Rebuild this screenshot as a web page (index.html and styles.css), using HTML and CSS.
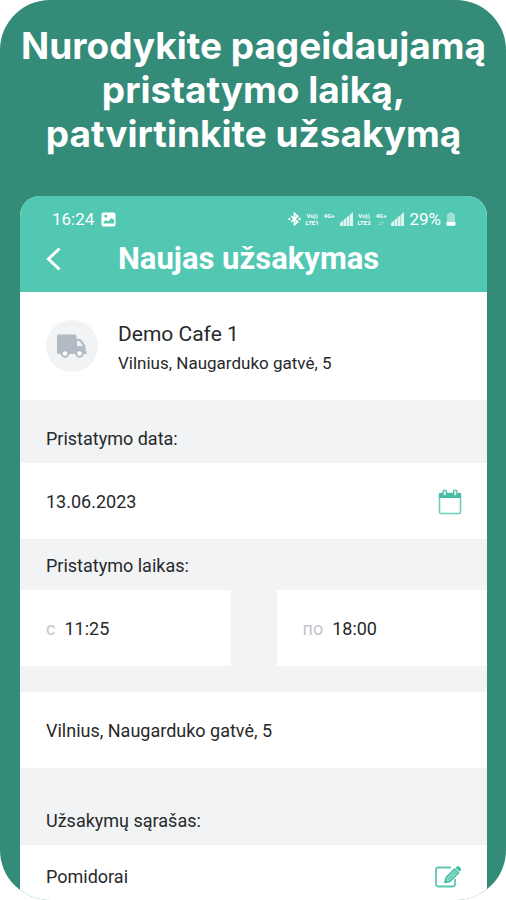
FILE: index.html
```html
<!DOCTYPE html>
<html lang="lt">
<head>
  <meta charset="UTF-8">
  <meta name="viewport" content="width=device-width, initial-scale=1.0">
  <title>Naujas užsakymas</title>
  <link rel="stylesheet" href="styles.css">
</head>
<body>
  <div class="poster">
    <h1 class="poster-title">Nurodykite pageidaujamą pristatymo laiką, patvirtinkite užsakymą</h1>

    <div class="phone">
      <!-- Header -->
      <header class="app-header">
        <div class="status-bar">
          <div class="status-group">
            <span>16:24</span>
            <svg width="15" height="15" viewBox="0 0 15 15" aria-hidden="true">
              <path fill="currentColor" fill-rule="evenodd" d="M2.500 0.500h10a2 2 0 0 1 2 2v10a2 2 0 0 1-2 2h-10a2 2 0 0 1-2-2v-10a2 2 0 0 1 2-2zM2.500 11.500h10.500v-3.500l-2.500-2-3.500 3.500-2-1.500-2.500 2zM3.500 3v2.500h2.500v-2.500z"/>
            </svg>
          </div>
          <div class="status-group status-right">
            <svg width="13" height="14" viewBox="0 0 14 14" aria-hidden="true">
              <path fill="none" stroke="currentColor" stroke-width="1.800" d="M3.500 4l7 6-3.500 3V1l3.500 3-7 6"/>
              <circle cx="1.500" cy="7" r="1.300" fill="currentColor"/>
              <circle cx="12.500" cy="7" r="1.300" fill="currentColor"/>
            </svg>
            <span class="net"><span>Vo))</span><span>LTE1</span></span>
            <span class="net"><span>4G+</span></span>
            <svg width="13" height="14" viewBox="0 0 13 14" aria-hidden="true">
              <path fill="currentColor" opacity=".8" d="M0 14v-3l3-2.500v5.500zM3.500 14v-6l2.500-2v8zM6.500 14v-8.500l3-2.500v11zM10 14v-11.500l3-2.500v14z"/>
            </svg>
            <span class="net"><span>Vo))</span><span>LTE2</span></span>
            <span class="net"><span>4G+</span><span>↓↑</span></span>
            <svg width="13" height="14" viewBox="0 0 13 14" aria-hidden="true">
              <path fill="currentColor" opacity=".8" d="M0 14v-3l3-2.500v5.500zM3.500 14v-6l2.500-2v8zM6.500 14v-8.500l3-2.500v11zM10 14v-11.500l3-2.500v14z"/>
            </svg>
            <span>29%</span>
            <svg width="10" height="14" viewBox="0 0 10 14" aria-hidden="true">
              <path fill="currentColor" opacity=".45" d="M1 3q0-1.500 2-1.500v-1h4v1q2 0 2 1.500v7H1z"/>
              <path fill="currentColor" d="M0.500 10h9v2.500q0 1.200-1.500 1.200H2q-1.500 0-1.500-1.200z"/>
            </svg>
          </div>
        </div>
        <div class="title-bar">
          <button class="icon-btn" type="button" aria-label="Atgal">
            <svg width="16" height="24" viewBox="0 0 16 24" aria-hidden="true">
              <path fill="none" stroke="currentColor" stroke-width="3" d="M13.500 1.500L2.500 12l11 10.500"/>
            </svg>
          </button>
          <h2 class="title">Naujas užsakymas</h2>
        </div>
      </header>

      <!-- Supplier -->
      <section class="supplier">
        <div class="avatar">
          <svg width="30" height="24" viewBox="0 0 30 24" aria-hidden="true">
            <path fill="#b2bac4" fill-rule="evenodd" d="M2 0.500h15.500a2 2 0 0 1 2 2v2.500h2.500q1.500 0 2.500 1.200l3 4q1 1.300 1 3v3.800h1v3h-28q-1.500 0-1.500-1.500v-16a2 2 0 0 1 1-2zM20 7v5h6l-3-4.300q-.5-.7-1.500-.7z"/>
            <circle cx="8" cy="19.500" r="3.300" fill="#fff" stroke="#b2bac4" stroke-width="2"/>
            <circle cx="22.500" cy="19.500" r="3.300" fill="#fff" stroke="#b2bac4" stroke-width="2"/>
          </svg>
        </div>
        <div class="supplier-info">
          <div class="supplier-name">Demo Cafe 1</div>
          <div class="supplier-address">Vilnius, Naugarduko gatvė, 5</div>
        </div>
      </section>

      <!-- Delivery form -->
      <form class="order-form">
        <label class="section-label" for="date">Pristatymo data:</label>
        <div class="row">
          <input class="field" id="date" type="text" value="13.06.2023">
          <button class="icon-btn" type="button" aria-label="Pasirinkti datą">
            <svg width="24" height="26" viewBox="0 0 24 26" aria-hidden="true">
              <rect x="1.500" y="4.500" width="21" height="20" rx="1.500" fill="none" stroke="#6fcfbb" stroke-width="1.600"/>
              <path fill="#45bca4" d="M1 4h22v5H1z"/>
              <rect x="5" y="1" width="3.500" height="6" rx="1.700" fill="#d5f0ea" stroke="#45bca4" stroke-width="1.200"/>
              <rect x="15.500" y="1" width="3.500" height="6" rx="1.700" fill="#d5f0ea" stroke="#45bca4" stroke-width="1.200"/>
            </svg>
          </button>
        </div>

        <div class="section-label section-label-small">Pristatymo laikas:</div>
        <div class="time-row">
          <label class="time-box">
            <span class="prefix">с</span>
            <input class="field" type="text" value="11:25">
          </label>
          <label class="time-box">
            <span class="prefix">по</span>
            <input class="field" type="text" value="18:00">
          </label>
        </div>

        <div class="row">
          <input class="field" type="text" value="Vilnius, Naugarduko gatvė, 5" aria-label="Adresas">
        </div>
      </form>

      <!-- Order list -->
      <section class="orders">
        <h3 class="section-label section-label-tall">Užsakymų sąrašas:</h3>
        <div class="row row-last">
          <span>Pomidorai</span>
          <button class="icon-btn" type="button" aria-label="Redaguoti">
            <svg width="28" height="24" viewBox="0 0 28 24" aria-hidden="true">
              <path fill="none" stroke="#5ec8b2" stroke-width="1.800" d="M17 2.500H4.500q-2.500 0-2.500 2.500v14q0 2.500 2.500 2.500h14q2.500 0 2.500-2.500v-5"/>
              <path fill="#8ed9ca" stroke="#45bca4" stroke-width="1.500" stroke-linejoin="round" d="M11 17.500l1-5 8.500-8.500 4 4-8.500 8.500z"/>
              <path fill="#45bca4" d="M21.500 3l1.500-1.500q1-.8 2 0l1.800 1.800q1 1 0 2l-1.500 1.500zM10.500 18l.7-3.500 2.800 2.800z"/>
              <path fill="none" stroke="#45bca4" d="M14 14.500l8-8"/>
            </svg>
          </button>
        </div>
      </section>
    </div>
  </div>
</body>
</html>
```
FILE: styles.css
```css
/* Global */
* {
  box-sizing: border-box;
}

body {
  margin: 0;
  background-color: #fff;
  font-family: Roboto, "Liberation Sans", sans-serif;
  color: #27292b;
}

button,
input {
  font: inherit;
  color: inherit;
  padding: 0;
  border: none;
  background: none;
}

/* Poster */
.poster {
  display: flex;
  flex-direction: column;
  min-height: 100vh;
  padding: 24px 19px 0 20px;
  background-color: #338b78;
  border-radius: 50px;
  overflow: hidden;
}

.poster-title {
  margin: 0 0 40px;
  color: #fff;
  font-family: Inter, sans-serif;
  font-size: 37px;
  font-weight: 700;
  line-height: 44px;
  text-align: center;
}

/* Phone */
.phone {
  flex: 1;
  background-color: #fff;
  border-radius: 20px 20px 0 0;
  overflow: hidden;
}

.app-header {
  padding: 12px 26px 17px;
  background-color: #52c8b3;
  color: #fff;
}

.status-bar {
  display: flex;
  justify-content: space-between;
  align-items: center;
  height: 22px;
  padding: 0 5px 0 6px;
  font-size: 17px;
}

.status-group {
  display: flex;
  align-items: center;
  gap: 7px;
}

.status-right {
  gap: 5px;
}

.net {
  display: flex;
  flex-direction: column;
  height: 14px;
  font-size: 6px;
  font-weight: 700;
  line-height: 7px;
  text-align: center;
}

.title-bar {
  display: flex;
  align-items: center;
  gap: 56px;
  padding-top: 13px;
}

.title {
  margin: 0;
  font-size: 31px;
  font-weight: 700;
  line-height: 32px;
}

.icon-btn {
  display: flex;
  cursor: pointer;
}

/* Supplier */
.supplier {
  display: flex;
  align-items: center;
  gap: 20px;
  height: 108px;
  padding: 0 26px;
}

.avatar {
  display: flex;
  justify-content: center;
  align-items: center;
  width: 52px;
  height: 52px;
  background-color: #f1f3f5;
  border-radius: 50%;
}

.supplier-info {
  padding-top: 4px;
}

.supplier-name {
  font-size: 21px;
  line-height: 30px;
}

.supplier-address {
  font-size: 17px;
  line-height: 28px;
}

/* Rows */
.section-label {
  display: block;
  margin: 0;
  padding: 27px 26px 12px;
  background-color: #f1f3f5;
  font-size: 18px;
  font-weight: 400;
  line-height: 24px;
}

.section-label-small {
  padding-top: 15px;
}

.section-label-tall {
  padding-top: 41px;
}

.row {
  display: flex;
  justify-content: space-between;
  align-items: center;
  min-height: 76px;
  padding: 2px 25px 0 26px;
  font-size: 18px;
  line-height: 24px;
}

.row-last {
  min-height: 0;
  padding-top: 20px;
}

.field {
  flex: 1;
  width: 100%;
  min-width: 0;
}

/* Time */
.time-row {
  display: grid;
  grid-template-columns: 1fr 1fr;
  gap: 46px;
  padding-bottom: 26px;
  background-color: #f1f3f5;
}

.time-box {
  display: flex;
  align-items: center;
  gap: 9px;
  height: 76px;
  padding: 0 26px;
  background-color: #fff;
  font-size: 18px;
}

.prefix {
  color: #c3c6c9;
}
```
